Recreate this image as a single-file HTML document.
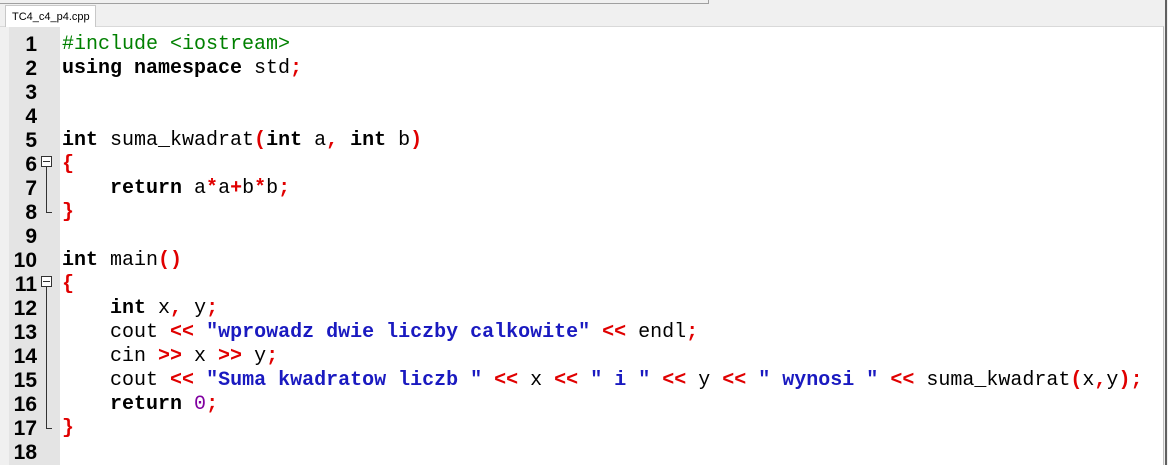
<!DOCTYPE html>
<html><head><meta charset="utf-8"><style>
html,body{margin:0;padding:0;width:1168px;height:465px;overflow:hidden;background:#f0f0f0;position:relative;font-family:"Liberation Sans",sans-serif}
.topbox{position:absolute;left:0;top:0;width:708px;height:3px;border-bottom:1px solid #a0a0a0;border-right:1px solid #a0a0a0}
.tab{position:absolute;left:5px;top:5px;width:91px;height:22px;background:#fff;border:1px solid #c8c8c8;border-bottom:none;font-size:11px;line-height:22px;padding-left:6px;box-sizing:border-box;color:#000}
.ed{position:absolute;left:0;top:26px;width:1163px;height:439px;background:#fff;border-top:1px solid #d9d9d9;border-right:1px solid #c0c0c0}
.lstrip{position:absolute;left:0;top:27px;width:9px;height:438px;background:#f0f0f0}
.gut{position:absolute;left:9px;top:27px;width:51px;height:438px;background:#e4e4e4}
.rb{position:absolute;left:1165px;top:0;width:2px;height:465px;background:#606060}
.nums,.code{position:absolute;top:33px;font-family:"Liberation Mono",monospace;font-size:20px;line-height:24px;white-space:pre;color:#000}
.nums{left:9px;width:28px;text-align:right;font-weight:bold;font-family:"Liberation Sans",sans-serif;font-size:21px}
.code{left:62px}
.b{font-weight:bold}.g{color:#008000}.r{color:#e00000;font-weight:bold}.s{color:#1a1ac0;font-weight:bold}.n{color:#8000a0}
.fold{position:absolute;left:41px;width:11px;height:11px;border:1px solid #333;background:#fff;box-sizing:border-box}
.fold:after{content:"";position:absolute;left:1px;top:4px;width:7px;height:1px;background:#333}
.vl{position:absolute;left:46px;width:1px;background:#333}
.hl{position:absolute;left:46px;width:6px;height:1px;background:#333}
</style></head><body>
<div class="topbox"></div>
<div class="ed"></div>
<div class="tab">TC4_c4_p4.cpp</div>
<div class="lstrip"></div>
<div class="gut"></div>
<div class="rb"></div>
<div class="nums">1
2
3
4
5
6
7
8
9
10
11
12
13
14
15
16
17
18</div>
<div class="fold" style="top:156px"></div>
<div class="vl" style="top:167px;height:45px"></div>
<div class="hl" style="top:212px"></div>
<div class="fold" style="top:276px"></div>
<div class="vl" style="top:287px;height:141px"></div>
<div class="hl" style="top:428px"></div>
<div class="code"><span class="g">#include &lt;iostream&gt;</span>
<span class="b">using namespace</span> std<span class="r">;</span>


<span class="b">int</span> suma_kwadrat<span class="r">(</span><span class="b">int</span> a<span class="r">,</span> <span class="b">int</span> b<span class="r">)</span>
<span class="r">{</span>
    <span class="b">return</span> a<span class="r">*</span>a<span class="r">+</span>b<span class="r">*</span>b<span class="r">;</span>
<span class="r">}</span>

<span class="b">int</span> main<span class="r">()</span>
<span class="r">{</span>
    <span class="b">int</span> x<span class="r">,</span> y<span class="r">;</span>
    cout <span class="r">&lt;&lt;</span> <span class="s">"wprowadz dwie liczby calkowite"</span> <span class="r">&lt;&lt;</span> endl<span class="r">;</span>
    cin <span class="r">&gt;&gt;</span> x <span class="r">&gt;&gt;</span> y<span class="r">;</span>
    cout <span class="r">&lt;&lt;</span> <span class="s">"Suma kwadratow liczb "</span> <span class="r">&lt;&lt;</span> x <span class="r">&lt;&lt;</span> <span class="s">" i "</span> <span class="r">&lt;&lt;</span> y <span class="r">&lt;&lt;</span> <span class="s">" wynosi "</span> <span class="r">&lt;&lt;</span> suma_kwadrat<span class="r">(</span>x<span class="r">,</span>y<span class="r">);</span>
    <span class="b">return</span> <span class="n">0</span><span class="r">;</span>
<span class="r">}</span>
</div>
</body></html>
